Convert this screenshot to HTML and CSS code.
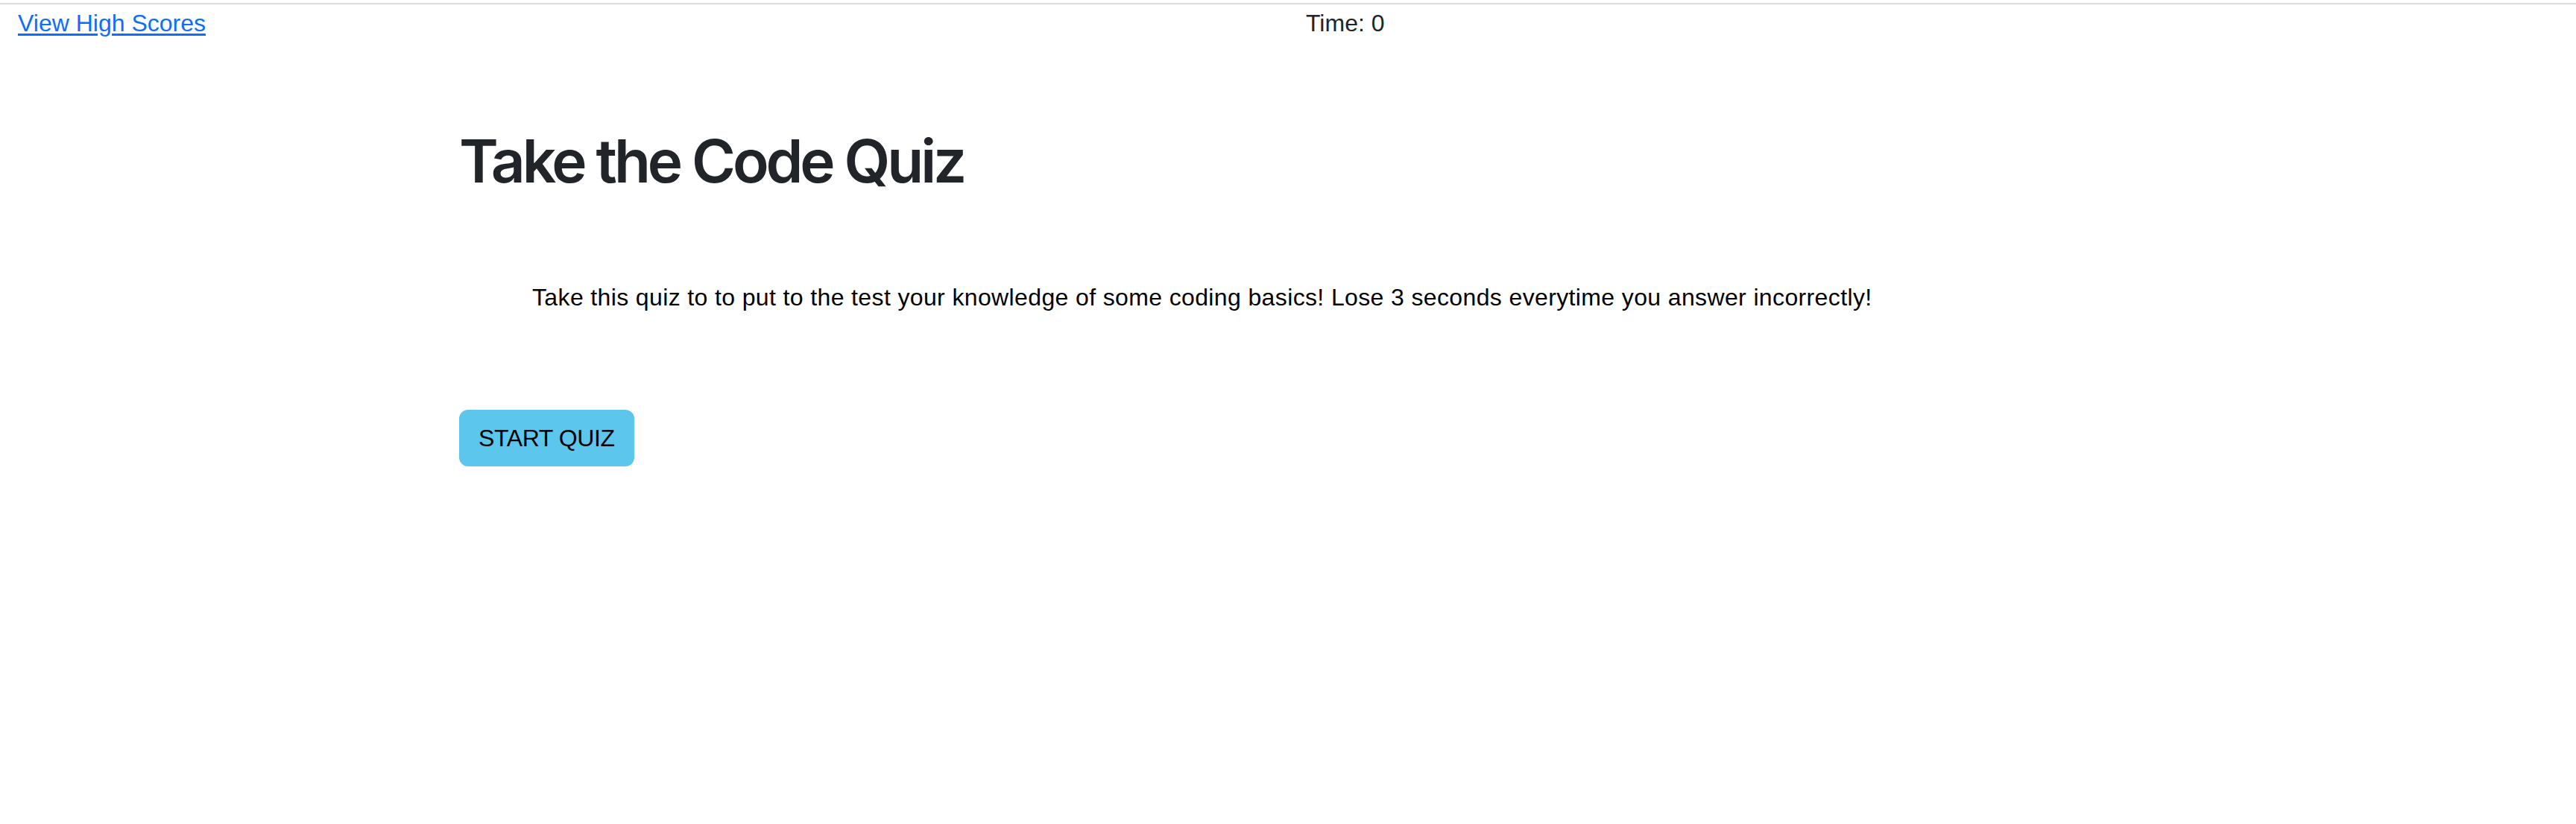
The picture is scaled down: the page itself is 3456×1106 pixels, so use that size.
FILE: index.html
```html
<!DOCTYPE html>
<html lang="en">
<head>
<meta charset="utf-8">
<title>Code Quiz</title>
<link rel="stylesheet" href="styles.css">
</head>
<body>
<header class="topbar">
  <div class="col"><a class="scores-link" href="#">View High Scores</a></div>
  <div class="col">Time: <span class="time-value">0</span></div>
</header>
<main class="quiz">
  <h1 class="quiz-title">Take the Code Quiz</h1>
  <p class="quiz-intro">Take this quiz to to put to the test your knowledge of some coding basics! Lose 3 seconds everytime you answer incorrectly!</p>
  <button class="start-btn" type="button">START QUIZ</button>
</main>
</body>
</html>
```

FILE: styles.css
```css
html, body {
  margin: 0;
  padding: 0;
  background: #ffffff;
}

body {
  font-family: "Liberation Sans", Arial, sans-serif;
  font-size: 32px;
  line-height: 1.5;
  color: #212529;
}

.topbar {
  margin-top: 4px;
  border-top: 2px solid #dcdcdc;
  padding-top: 1px;
  display: grid;
  grid-template-columns: 1fr 1fr;
}

.col {
  padding: 0 24px;
}

.scores-link {
  color: #0d6efd;
  text-decoration: underline;
  text-underline-offset: 3px;
}

.quiz {
  padding-left: 616px;
  padding-right: 616px;
}

.quiz-title {
  margin: 113px 0 0;
  font-family: Inter, "Liberation Sans", sans-serif;
  font-weight: 600;
  font-size: 80px;
  line-height: 1.2;
  letter-spacing: -4.1px;
  color: #212529;
}

.quiz-intro {
  margin: 111px 0 0;
  padding-left: 98px;
  letter-spacing: 0.37px;
  color: #000000;
}

.start-btn {
  margin-top: 127px;
  display: inline-block;
  font-family: "Liberation Sans", Arial, sans-serif;
  font-size: 32px;
  line-height: 1.5;
  letter-spacing: -0.4px;
  padding: 12px 24px;
  border: 2px solid #5cc6ec;
  border-radius: 12px;
  background: #5cc6ec;
  color: #000000;
  cursor: pointer;
}
```
